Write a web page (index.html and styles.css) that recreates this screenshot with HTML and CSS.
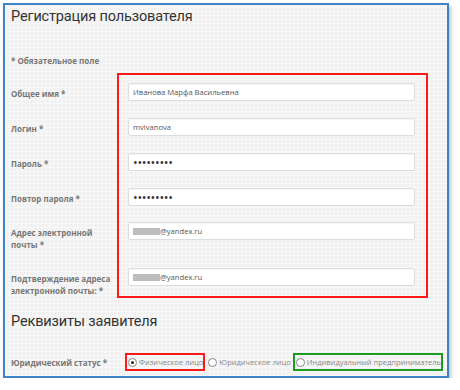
FILE: index.html
```html
<!DOCTYPE html>
<html lang="ru">
<head>
    <meta charset="UTF-8">
    <title>Регистрация пользователя</title>
    <link rel="stylesheet" href="styles.css">
</head>
<body>

<div class="window">
    <h1 class="title">Регистрация пользователя</h1>
    <p class="note">* Обязательное поле</p>

    <div class="form">
        <div class="labels">
            <div class="label">Общее имя *</div>
            <div class="label">Логин *</div>
            <div class="label">Пароль *</div>
            <div class="label">Повтор пароля *</div>
            <div class="label">Адрес электронной<br>почты *</div>
            <div class="label">Подтверждение адреса<br>электронной почты: *</div>
        </div>
        <div class="fields">
            <div class="input">Иванова Марфа Васильевна</div>
            <div class="input">mvivanova</div>
            <div class="input dots">•••••••••</div>
            <div class="input dots">•••••••••</div>
            <div class="input"><span class="hidden-part"></span>@yandex.ru</div>
            <div class="input"><span class="hidden-part"></span>@yandex.ru</div>
        </div>
    </div>

    <h2 class="title">Реквизиты заявителя</h2>

    <div class="status-row">
        <div class="status-label">Юридический статус *</div>
        <div class="radios">
            <span class="option option-red"><span class="radio checked"></span>Физическое лицо</span>
            <span class="option"><span class="radio"></span>Юридическое лицо</span>
            <span class="option option-green"><span class="radio"></span>Индивидуальный предприниматель</span>
        </div>
    </div>
</div>

</body>
</html>
```

FILE: styles.css
```css
/* General styling */
body {
    margin: 0;
    background: #ffffff;
    font-family: "Open Sans", "DejaVu Sans", sans-serif;
}

/* Window frame */
.window {
    box-sizing: border-box;
    width: 446px;
    height: 375px;
    margin: 3px 0 0 3px;
    padding: 0 19px 0 6px;
    border: 2px solid #3d84c6;
    background-color: #f1f1f1;
    background-image:
        repeating-linear-gradient(0deg, rgba(255, 255, 255, 0.45) 0 1px, transparent 1px 4px),
        repeating-linear-gradient(90deg, rgba(255, 255, 255, 0.45) 0 1px, transparent 1px 4px);
    box-shadow: 2px 3px 4px rgba(0, 0, 0, 0.25);
}

/* Headings */
.title {
    margin: 2px 0 0;
    font-family: Roboto, "Open Sans", sans-serif;
    font-size: 14.5px;
    line-height: 20px;
    letter-spacing: -0.15px;
    font-weight: normal;
    color: #333333;
}

h2.title {
    margin-top: 14px;
}

.note {
    margin: 28px 0 7px;
    font-size: 8px;
    line-height: 11px;
    font-weight: bold;
    color: #777777;
}

/* Form rows */
.form {
    display: grid;
    grid-template-columns: 106px 1fr;
}

.labels,
.fields {
    display: grid;
    grid-template-rows: 35px 35px 35px 34px 46px 18px;
}

.labels {
    padding-top: 10px;
}

.label {
    padding-top: 5px;
    font-size: 8px;
    line-height: 12px;
    font-weight: bold;
    color: #777777;
    white-space: nowrap;
}

.fields {
    border: 2px solid #ff1a1a;
    padding: 8px 11px 10px 9px;
}

.input {
    height: 18px;
    box-sizing: border-box;
    padding-left: 4px;
    display: flex;
    align-items: center;
    background: #ffffff;
    border: 1px solid #dddddd;
    border-radius: 2px;
    box-shadow: inset 0 1px 1px rgba(0, 0, 0, 0.04);
    font-size: 7.6px;
    color: #555555;
}

.dots {
    font-size: 12.5px;
    color: #333333;
    letter-spacing: -0.3px;
}

.hidden-part {
    width: 27px;
    height: 7px;
    background: #bdbdbd;
}

/* Legal status */
.status-row {
    display: grid;
    grid-template-columns: 106px 1fr;
    align-items: center;
    margin-top: 21px;
}

.status-label {
    font-size: 8px;
    font-weight: bold;
    color: #777777;
}

.radios {
    display: flex;
    align-items: center;
    padding-left: 8px;
}

.option {
    display: flex;
    align-items: center;
    gap: 2px;
    height: 18px;
    box-sizing: border-box;
    border: 2px solid transparent;
    padding: 0 0 0 1px;
    font-size: 7.5px;
    color: #888888;
    white-space: nowrap;
}

.option-red {
    border-color: #ff1a1a;
}

.option-green {
    border-color: #1f9a1f;
}

.radio {
    width: 7px;
    height: 7px;
    border: 1px solid #888888;
    border-radius: 50%;
    background: #ffffff;
    flex-shrink: 0;
    position: relative;
}

.radio.checked::after {
    content: "";
    position: absolute;
    left: 2px;
    top: 2px;
    width: 3px;
    height: 3px;
    border-radius: 50%;
    background: #222222;
}
```
